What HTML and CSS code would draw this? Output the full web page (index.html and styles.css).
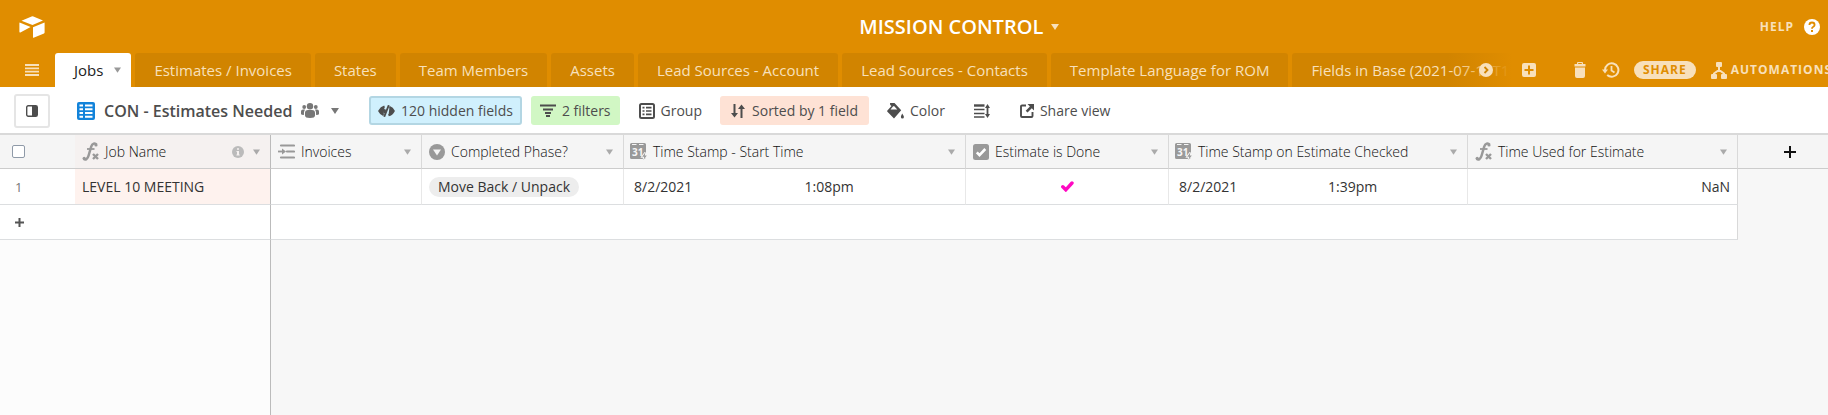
FILE: index.html
```html
<!DOCTYPE html>
<html lang="en">
<head>
<meta charset="utf-8">
<title>MISSION CONTROL</title>
<link rel="stylesheet" href="styles.css">
</head>
<body>
<svg class="sprite" aria-hidden="true">
  <symbol id="caret" viewBox="0 0 8 6"><path d="M0 0h8L4 6z"/></symbol>
  <symbol id="formula" viewBox="0 0 17 19">
    <path d="M14.500 2.600C13 .6 10.300 1.200 9.200 4.600L6.600 13.500C5.600 17.300 3.400 18.300 1.600 16.800" fill="none" stroke="currentColor" stroke-width="2.500"/>
    <circle cx="14" cy="3" r="1.600"/><circle cx="2.200" cy="16.300" r="1.600"/>
    <path d="M5 7h7.500" stroke="currentColor" stroke-width="1.800"/>
    <path d="M11 12l5 5M16 12l-5 5" stroke="currentColor" stroke-width="2.400"/>
  </symbol>
</svg>

<header class="topbar">
  <a class="logo" href="#" aria-label="Home">
    <svg width="26" height="22" viewBox="0 0 26 22"><path d="M2.500 4.800L12.600.5q.9-.3 1.800 0L24 4.600 13.500 9zM.4 7.200q0-.8.8-.5L11.600 11 1.400 16.400q-1 .4-1-.6zM14 11.200L25.600 6.600v10q0 .7-.6 1L14.600 21.700q-.6.100-.6-.5z"/></svg>
  </a>
  <button class="base-title" type="button">MISSION CONTROL <svg class="caret" width="8" height="6"><use href="#caret"/></svg></button>
  <a class="help" href="#">HELP
    <svg width="16" height="16" viewBox="0 0 16 16"><circle cx="8" cy="8" r="8" fill="#fff"/><path d="M5.400 6q0-2.500 2.600-2.500T10.600 6Q10.600 7.200 9 8q-1 .5-1 1.700" fill="none" stroke="#e08d00" stroke-width="1.800"/><path d="M7 11h2v2H7z" fill="#e08d00"/></svg>
  </a>
</header>

<nav class="tabbar">
  <button class="menu" type="button" aria-label="All tables">
    <svg width="14" height="12" viewBox="0 0 14 12"><path d="M0 1h14M0 4.400h14M0 7.700h14M0 11h14" stroke="currentColor" stroke-width="1.800"/></svg>
  </button>
  <div class="tabs">
    <a class="tab active" href="#">Jobs <svg class="caret" width="7" height="6"><use href="#caret"/></svg></a>
    <a class="tab" href="#">Estimates / Invoices</a>
    <a class="tab" href="#">States</a>
    <a class="tab" href="#">Team Members</a>
    <a class="tab" href="#">Assets</a>
    <a class="tab" href="#">Lead Sources - Account</a>
    <a class="tab" href="#">Lead Sources - Contacts</a>
    <a class="tab" href="#">Template Language for ROM</a>
    <a class="tab" href="#">Fields in Base (2021-07-19T1</a>
    <span class="fade"></span>
    <button class="scroll-right" type="button" aria-label="Scroll tables right">
      <svg width="14" height="14" viewBox="0 0 14 14"><circle cx="7" cy="7" r="7" fill="#f8e0bb"/><path d="M5.500 4l3 3-3 3" fill="none" stroke="#d18400" stroke-width="1.800"/></svg>
    </button>
  </div>
  <div class="tools">
    <button class="add-table" type="button" aria-label="Add table">
      <svg width="14" height="14" viewBox="0 0 14 14"><path fill-rule="evenodd" d="M2 0h10a2 2 0 0 1 2 2v10a2 2 0 0 1-2 2H2a2 2 0 0 1-2-2V2a2 2 0 0 1 2-2zM6 2.500V6H2.500v2H6v3.500h2V8h3.500V6H8V2.500z"/></svg>
    </button>
    <button class="trash" type="button" aria-label="Trash">
      <svg width="12" height="16" viewBox="0 0 12 16"><path fill-rule="evenodd" d="M3 2V1a1 1 0 0 1 1-1h4a1 1 0 0 1 1 1v1h2.500v2.500H.5V2zM4.200 1v1h3.600V1zM1 5.500h10V14a2 2 0 0 1-2 2H3a2 2 0 0 1-2-2z"/></svg>
    </button>
    <button class="history" type="button" aria-label="History">
      <svg width="18" height="16" viewBox="0 0 18 16"><path d="M3 8A6.700 6.700 0 1 1 5.200 13" fill="none" stroke="currentColor" stroke-width="2"/><path d="M0 7.500h6l-3 4z"/><path d="M9.500 4v4.500l3 2" fill="none" stroke="currentColor" stroke-width="1.800"/></svg>
    </button>
    <button class="share" type="button">SHARE</button>
    <button class="automations" type="button">
      <svg width="16" height="17" viewBox="0 0 16 17"><rect x="5" width="6" height="5" rx="1"/><rect y="12" width="6" height="5" rx="1"/><rect x="10" y="12" width="6" height="5" rx="1"/><path d="M8 4v4.500M3 13v-1.500L8 8l5 3.500V13" fill="none" stroke="currentColor" stroke-width="2"/></svg>
      AUTOMATIONS
    </button>
  </div>
</nav>

<div class="viewbar">
  <button class="sidebar-toggle" type="button" aria-label="Toggle views">
    <svg width="12" height="12" viewBox="0 0 12 12"><rect x=".7" y=".7" width="10.600" height="10.600" rx="1.500" fill="none" stroke="currentColor" stroke-width="1.400"/><path d="M6 1h5v10H6z"/></svg>
  </button>
  <button class="view-name" type="button">
    <svg class="grid-icon" width="18" height="18" viewBox="0 0 18 18"><rect width="18" height="18" rx="2"/><path d="M2.500 3.500H6M8 3.500h7.500M2.500 7.300H6M8 7.300h7.500M2.500 11H6M8 11h7.500M2.500 14.700H6M8 14.700h7.500" stroke="#fff" stroke-width="2.100"/></svg>
    CON - Estimates Needed
    <svg class="people" width="18" height="15" viewBox="0 0 18 15"><circle cx="9" cy="3.200" r="3.200"/><circle cx="3.200" cy="4" r="1.900"/><circle cx="14.800" cy="4" r="1.900"/><path d="M4 12.500V10q0-3 3-3h4q3 0 3 3v2.500Q14 15 9 15T4 12.500zM0 11V8.500Q0 6.600 2 6.600h2Q2.900 8 2.900 12 0 12 0 11zM18 11V8.500q0-1.900-2-1.900h-2q1.100 1.400 1.100 5.400 2.900 0 2.900-1z"/></svg>
    <svg class="caret" width="8" height="6"><use href="#caret"/></svg>
  </button>
  <div class="controls">
    <button class="control hidden-fields" type="button">
      <svg width="17" height="12" viewBox="0 0 17 12" fill="none" stroke="currentColor" stroke-width="1.900"><path d="M6.500 1.500Q3 2.500 1.200 6q1.300 2.800 4.300 4M11.500 2Q14.500 3 15.800 6q-1.800 3.500-5.300 4.300M10.800.2L6.200 11.800M7.300 4.300q-1.600 1.700-.6 3.700"/></svg>
      120 hidden fields
    </button>
    <button class="control filters" type="button">
      <svg width="16" height="13" viewBox="0 0 16 13"><path d="M0 1.500h16M3 5.500h10M5 9h6M6 12h4" stroke="currentColor" stroke-width="1.900"/></svg>
      2 filters
    </button>
    <button class="control group" type="button">
      <svg width="16" height="16" viewBox="0 0 16 16"><rect x="1" y="1" width="14" height="14" rx="1.500" fill="none" stroke="currentColor" stroke-width="2"/><path d="M3.500 4.700h2M7 4.700h5.500M3.500 8h2M7 8h5.500M3.500 11.300h2M7 11.300h5.500" stroke="currentColor" stroke-width="1.700"/></svg>
      Group
    </button>
    <button class="control sorted" type="button">
      <svg width="14" height="14" viewBox="0 0 14 14"><path d="M3.500 0v11M10.500 3v11" stroke="currentColor" stroke-width="2"/><path d="M0 9h7l-3.500 4.500zM7 5h7L10.500.5z"/></svg>
      Sorted by 1 field
    </button>
    <button class="control color" type="button">
      <svg width="17" height="16" viewBox="0 0 17 16"><path fill-rule="evenodd" d="M3 0h4.500L14.200 7.200 7 15.500.2 8.600Q0 8 .4 7.500L4.500 3 3.200 2zM6 3.500L3.500 6.500h6.800L7 3zM15.200 10.500q1.700 2.500 1.700 3.500 0 1.500-1.500 1.500T13.900 14q0-1 1.300-3.500z"/></svg>
      Color
    </button>
    <button class="control row-height" type="button" aria-label="Row height">
      <svg width="16" height="14" viewBox="0 0 16 14"><path d="M0 1.500h10.500" stroke="currentColor" stroke-width="2.400"/><path d="M0 5.500h10.500M0 9.500h10.500M0 13h10.500" stroke="currentColor" stroke-width="1.500"/><path d="M13.500 2v10" stroke="currentColor" stroke-width="1.800"/><path d="M11 4h5l-2.500-4zM11 10h5l-2.500 4z"/></svg>
    </button>
    <button class="control share-view" type="button">
      <svg width="14" height="14" viewBox="0 0 14 14"><path d="M6 1.500H2a1 1 0 0 0-1 1V12a1 1 0 0 0 1 1h9.500a1 1 0 0 0 1-1V8" fill="none" stroke="currentColor" stroke-width="1.900"/><path d="M7.500 0H14v6.500L11.800 4.300 7.500 8.500 5.700 6.700l4.200-4.300z"/></svg>
      Share view
    </button>
  </div>
</div>

<main class="grid">
  <table class="records">
    <colgroup>
      <col class="c-num"><col class="c-name"><col class="c-invoices"><col class="c-phase"><col class="c-start"><col class="c-done"><col class="c-checked"><col class="c-used"><col>
    </colgroup>
    <thead>
      <tr>
        <th class="num"><input class="select-all" type="checkbox" aria-label="Select all"></th>
        <th class="name"><div class="field"><svg class="formula" width="17" height="19"><use href="#formula"/></svg><span>Job Name</span>
          <svg class="info" width="12" height="12" viewBox="0 0 12 12"><circle cx="6" cy="6" r="6"/><path d="M5 2.200h2v1.600H5zM4.500 5H7v3.500h.7v1H4.400v-1H5V6h-.5z" fill="#f5f1f0"/></svg><svg class="caret" width="7" height="6"><use href="#caret"/></svg></div></th>
        <th><div class="field"><svg width="17" height="15" viewBox="0 0 17 15"><path d="M3 1.500h13M9 7.500h7M3 13.500h13" stroke="currentColor" stroke-width="2.200" stroke-linecap="round"/><path d="M0 7.500h5" stroke="currentColor" stroke-width="1.800"/><path d="M4 4.500v6l4-3z"/></svg><span>Invoices</span><svg class="caret" width="7" height="6"><use href="#caret"/></svg></div></th>
        <th><div class="field"><svg width="16" height="16" viewBox="0 0 16 16"><circle cx="8" cy="8" r="8"/><path d="M4 5.500h8L8 11.500z" fill="#f5f5f5"/></svg><span>Completed Phase?</span><svg class="caret" width="7" height="6"><use href="#caret"/></svg></div></th>
        <th><div class="field date-field"><svg width="17" height="17" viewBox="0 0 17 17"><path d="M1.500 0h13A1.500 1.500 0 0 1 16 1.500V16H1.500A1.500 1.500 0 0 1 0 14.500v-13A1.500 1.500 0 0 1 1.500 0z"/><path d="M2 1.500h4.500M9 1.500h4.500" stroke="#f5f5f5"/><text class="calendar-day" x="2" y="13">31</text><path class="bolt" d="M15.300 9.500l-3 4.200h2l-.8 3.300 3.300-4.500h-2z"/></svg><span>Time Stamp - Start Time</span><svg class="caret" width="7" height="6"><use href="#caret"/></svg></div></th>
        <th><div class="field"><svg width="16" height="16" viewBox="0 0 16 16"><rect width="16" height="16" rx="2.500"/><path d="M3.800 8.300l2.700 2.800L12.300 5" fill="none" stroke="#fff" stroke-width="2.600"/></svg><span>Estimate is Done</span><svg class="caret" width="7" height="6"><use href="#caret"/></svg></div></th>
        <th><div class="field date-field"><svg width="17" height="17" viewBox="0 0 17 17"><path d="M1.500 0h13A1.500 1.500 0 0 1 16 1.500V16H1.500A1.500 1.500 0 0 1 0 14.500v-13A1.500 1.500 0 0 1 1.500 0z"/><path d="M2 1.500h4.500M9 1.500h4.500" stroke="#f5f5f5"/><text class="calendar-day" x="2" y="13">31</text><path class="bolt" d="M15.300 9.500l-3 4.200h2l-.8 3.300 3.300-4.500h-2z"/></svg><span>Time Stamp on Estimate Checked</span><svg class="caret" width="7" height="6"><use href="#caret"/></svg></div></th>
        <th><div class="field"><svg class="formula" width="17" height="19"><use href="#formula"/></svg><span>Time Used for Estimate</span><svg class="caret" width="7" height="6"><use href="#caret"/></svg></div></th>
        <th class="add-field"><button type="button" aria-label="Add field"><svg width="12" height="12" viewBox="0 0 12 12"><path d="M6 0v12M0 6h12" stroke="currentColor" stroke-width="2"/></svg></button></th>
      </tr>
    </thead>
    <tbody>
      <tr>
        <td class="num">1</td>
        <td class="name">LEVEL 10 MEETING</td>
        <td></td>
        <td class="phase"><span class="pill">Move Back / Unpack</span></td>
        <td class="stamp"><div class="datetime"><span>8/2/2021</span><span>1:08pm</span></div></td>
        <td class="done"><svg width="13" height="11" viewBox="0 0 13 11" role="img" aria-label="Done"><path d="M1.800 5.800l3 3L11 2" fill="none" stroke="#ff08c2" stroke-width="3.400" stroke-linecap="round"/></svg></td>
        <td class="stamp"><div class="datetime"><span>8/2/2021</span><span>1:39pm</span></div></td>
        <td class="used">NaN</td>
        <td class="empty"></td>
      </tr>
      <tr class="add-row">
        <td class="num"><button type="button" aria-label="Add record"><svg width="9" height="9" viewBox="0 0 9 9"><path d="M4.500 0v9M0 4.500h9" stroke="currentColor" stroke-width="2"/></svg></button></td>
        <td class="frozen-edge"></td>
        <td class="last" colspan="6"></td>
        <td class="empty"></td>
      </tr>
    </tbody>
  </table>
  <div class="below"><div class="below-frozen"></div></div>
</main>
</body>
</html>
```

FILE: styles.css
```css
* { box-sizing: border-box; }

body {
  margin: 0;
  min-height: 100vh;
  display: flex;
  flex-direction: column;
  overflow: hidden;
  background: #fff;
  color: #333;
  font: 14px/20px "Segoe UI", "Open Sans", sans-serif;
}

button {
  display: flex;
  align-items: center;
  padding: 0;
  border: 0;
  background: none;
  color: inherit;
  font: inherit;
  white-space: nowrap;
}

a { color: inherit; text-decoration: none; }
svg { flex: none; fill: currentColor; }
.sprite { display: none; }

.topbar {
  display: grid;
  grid-template-columns: 845fr auto 765fr;
  align-items: center;
  height: 53px;
  padding: 0 8px 0 19px;
  background: #e08d00;
  color: #fff;
}
.logo { display: flex; }
.base-title { gap: 8px; font-size: 20px; font-weight: 600; line-height: 24px; }
.base-title .caret { color: #f8e0bb; }
.help {
  display: flex;
  align-items: center;
  justify-self: end;
  gap: 10px;
  color: #f8e0bb;
  font-size: 12px;
  font-weight: 700;
  letter-spacing: 1px;
}

.tabbar {
  display: flex;
  height: 34px;
  background: #e08d00;
  color: #f8e0bb;
}
.menu { width: 55px; padding-left: 25px; }
.tabs {
  position: relative;
  display: flex;
  flex: 1;
  gap: 4px;
  min-width: 0;
  overflow: hidden;
}
.tab {
  display: flex;
  flex: none;
  align-items: center;
  gap: 11px;
  padding: 0 19px;
  border-radius: 3px 3px 0 0;
  background: #d18400;
  font-size: 15px;
  white-space: nowrap;
}
.tab.active { padding-right: 10px; background: #fff; color: #222; }
.tab .caret { color: #999; }
.fade {
  position: absolute;
  top: 0;
  right: 0;
  width: 72px;
  height: 100%;
  background: linear-gradient(90deg, #e08d0000, #e08d00 90%);
}
.scroll-right { position: absolute; top: 10px; right: 27px; }
.tools { display: flex; flex: none; align-items: center; width: 308px; }
.add-table { margin-left: 2px; }
.trash { margin-left: 38px; }
.history { margin-left: 16px; }
.share {
  height: 18px;
  margin-left: 14px;
  padding: 0 9px;
  border-radius: 9px;
  background: #f8e0bb;
  color: #e08d00;
  font-size: 12px;
  font-weight: 700;
  letter-spacing: 1px;
}
.automations {
  gap: 4px;
  margin-left: 15px;
  font-size: 12px;
  font-weight: 700;
  letter-spacing: 1px;
}

.viewbar { display: flex; align-items: center; height: 46px; padding: 1px 0 0 14px; color: #4d4d4d; }
.sidebar-toggle {
  justify-content: center;
  width: 36px;
  height: 34px;
  border: 2px solid #e5e5e5;
  border-radius: 3px;
}
.view-name { width: 292px; margin-left: 27px; font-size: 16px; font-weight: 600; }
.grid-icon { margin-right: 9px; color: #1283da; }
.people { margin: 0 12px 0 9px; color: #777; }
.view-name .caret { color: #777; }
.controls { display: flex; gap: 9px; }
.control { gap: 6px; height: 29px; padding: 0 9px; border-radius: 3px; }
.hidden-fields { border: 2px solid #b3d6e3; padding: 0 7px; background: #d0f0fd; }
.filters { background: #d1f7c4; }
.group { margin-left: 1px; }
.sorted { gap: 7px; padding: 0 11px; background: #fee2d5; }
.row-height { margin-left: 2px; margin-right: 3px; }

.grid { display: flex; flex: 1; flex-direction: column; border-top: 2px solid #d9d9d9; }
.records { width: 100%; table-layout: fixed; border-collapse: separate; border-spacing: 0; }
.c-num { width: 75px; }
.c-name { width: 196px; }
.c-invoices { width: 151px; }
.c-phase { width: 202px; }
.c-start { width: 342px; }
.c-done { width: 203px; }
.c-checked { width: 299px; }
.c-used { width: 270px; }

th, td { padding: 0; text-align: left; white-space: nowrap; }
th {
  height: 34px;
  border-right: 1px solid #d9d9d9;
  border-bottom: 1px solid #ccc;
  background: #f5f5f5;
  font-weight: 300;
}
th.num { padding-left: 12px; border-right: 0; }
th.name { border-right-color: #bbb; background: #f5f1f0; }
.field { display: flex; align-items: center; gap: 6px; padding: 0 10px 0 7px; color: #999; }
.date-field { padding-left: 6px; }
.field span { color: #111; }
.field .caret { margin-left: auto; color: #aaa; }
.field .info { margin-left: auto; color: #bbb; }
.field .info + .caret { margin-left: 3px; }
.calendar-day { fill: #f5f5f5; font-size: 10px; font-weight: 700; }
.bolt { stroke: #f5f5f5; stroke-width: 2px; paint-order: stroke; }
.select-all {
  appearance: none;
  display: block;
  width: 13px;
  height: 13px;
  margin: 0;
  border: 1px solid #8f9aa8;
  border-radius: 2px;
  background: #fff;
}
th.add-field { border-right: 0; color: #111; }
.add-field button { padding-left: 46px; }

td {
  height: 36px;
  border-right: 1px solid #e8e8e8;
  border-bottom: 1px solid #dcdee0;
  background: #fff;
  color: #333;
}
td.num { padding-left: 15px; border-right: 0; color: #777; font-size: 13px; }
td.name { padding-left: 7px; border-right-color: #bbb; background: #fef2ee; }
td.phase { padding-left: 7px; }
.pill { display: inline-block; padding: 0 9px; border-radius: 10px; background: #ededed; }
td.stamp { padding-left: 10px; }
.datetime { display: grid; grid-template-columns: 1fr 1fr; gap: 10px; }
td.done { text-align: center; }
td.used { padding-right: 7px; border-right-color: #d9d9d9; text-align: right; }
td.empty { border: 0; background: #f7f7f7; }
.add-row td { height: 35px; }
.add-row .num { color: #555; }
.add-row .frozen-edge { border-right-color: #bbb; }
.add-row .last { border-right-color: #d9d9d9; }

.below { display: flex; flex: 1; background: #f7f7f7; }
.below-frozen { width: 271px; border-right: 1px solid #bbb; background: #fcfcfc; }
```
